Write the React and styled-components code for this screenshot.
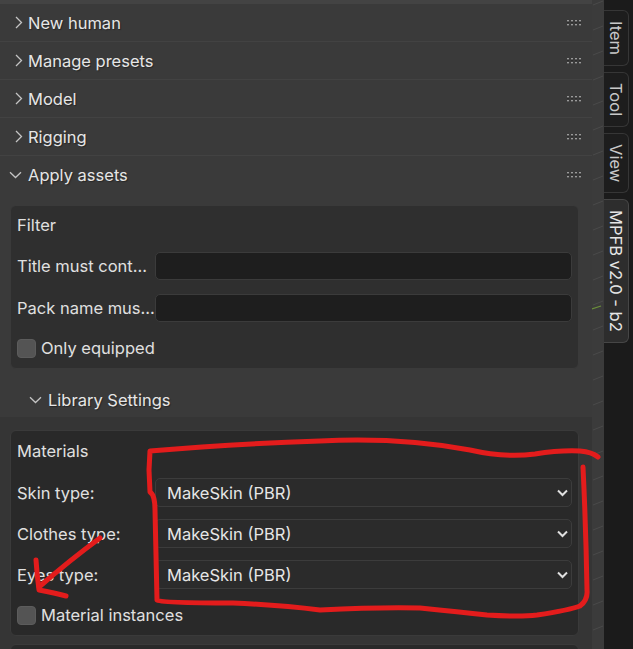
import styled, { createGlobalStyle } from "styled-components";

const GlobalStyle = createGlobalStyle`
  html, body {
    margin: 0;
    padding: 0;
    background: #1d1d1d;
  }
  body {
    font-family: Inter, "Noto Sans", "DejaVu Sans", sans-serif;
  }
`;

const Screen = styled.div`
  position: relative;
  display: flex;
  width: 633px;
  height: 649px;
  overflow: hidden;
`;

const Panel = styled.div`
  flex: none;
  width: 592px;
  display: flex;
  flex-direction: column;
  background: #3a3a3a;
  border-top: 4px solid #434343;
`;

const Header = styled.div`
  flex: none;
  display: flex;
  align-items: center;
  height: ${(p) => (p.$open ? "38px" : "37px")};
  padding-left: ${(p) => (p.$sub ? "19px" : "9px")};
  border-bottom: ${(p) => (p.$open ? "none" : "1px solid #424242")};
  color: #e6e6e6;
  font-size: 16.5px;
  text-shadow: 1px 1px 1px rgba(0, 0, 0, 0.35);
`;

const Chevron = styled.span`
  display: flex;
  align-items: center;
  justify-content: ${(p) => (p.$open ? "flex-start" : "center")};
  width: 19px;
  flex: none;
`;

const Grip = styled.span`
  margin-left: auto;
  margin-right: 11px;
  display: flex;
`;

const Body = styled.div`
  display: flex;
  flex-direction: column;
  padding: 11px 13px 0 10px;
`;

const LibraryBody = styled.div`
  display: flex;
  flex-direction: column;
  gap: 8px;
  margin: 0 -13px 0 -10px;
  padding: 13px 13px 0 10px;
  background: #353535;
`;

const Box = styled.div`
  flex: none;
  display: flex;
  flex-direction: column;
  gap: ${(p) => p.$gap}px;
  padding: ${(p) => p.$pad};
  background: ${(p) => p.$bg};
  border: 1px solid #3a3a3a;
  border-radius: 6px;
  color: #e0e0e0;
  font-size: 16.5px;
`;

const Title = styled.div`
  height: 24px;
  line-height: 24px;
  margin-bottom: ${(p) => p.$after}px;
`;

const Row = styled.div`
  display: flex;
  align-items: center;
  height: ${(p) => p.$h || 28}px;
`;

const Label = styled.span`
  width: 138px;
  flex: none;
  white-space: nowrap;
`;

const Field = styled.div`
  box-sizing: border-box;
  width: 417px;
  flex: none;
  height: 28px;
  background: #1e1e1e;
  border: 1px solid #3b3b3b;
  border-radius: 5px;
`;

const Select = styled.div`
  box-sizing: border-box;
  display: flex;
  align-items: center;
  justify-content: space-between;
  flex: none;
  width: 417px;
  height: 29px;
  padding: 0 2px 0 11px;
  background: #2b2b2b;
  border: 1px solid #3c3c3c;
  border-radius: 5px;
  color: #e6e6e6;
`;

const Check = styled.span`
  box-sizing: border-box;
  width: 19px;
  height: 19px;
  margin-right: 5px;
  background: #545454;
  border: 1px solid #5c5c5c;
  border-radius: 4px;
`;

const Strip = styled.div`
  flex: none;
  width: 12px;
  background: #3b3b3b;
`;

const TabBar = styled.div`
  flex: 1;
  display: flex;
  flex-direction: column;
  gap: 6px;
  padding-top: 10px;
  background: #1b1b1b;
`;

const Tab = styled.div`
  box-sizing: border-box;
  width: 25px;
  padding: 10px 0;
  display: flex;
  align-items: center;
  writing-mode: vertical-rl;
  background: ${(p) => (p.$active ? "#2d2d2d" : "#1d1d1d")};
  border: 1px solid ${(p) => (p.$active ? "#464646" : "#363636")};
  border-left: none;
  border-radius: 0 6px 6px 0;
  color: ${(p) => (p.$active ? "#e6e6e6" : "#c8c8c8")};
  font-size: 16.5px;
  line-height: 24px;
  white-space: nowrap;
`;

const Overlay = styled.svg`
  position: absolute;
  left: 0;
  top: 0;
  pointer-events: none;
`;

const RightIcon = () => (
  <svg width="9" height="13" viewBox="0 0 9 13">
    <path d="M2 1 L7.5 6.5 L2 12" fill="none" stroke="#c4c4c4" strokeWidth="1.3" />
  </svg>
);

const DownIcon = () => (
  <svg width="13" height="8" viewBox="0 0 13 8">
    <path d="M1 1.2 L6.5 6.5 L12 1.2" fill="none" stroke="#c4c4c4" strokeWidth="1.3" />
  </svg>
);

const SelectIcon = () => (
  <svg width="14" height="8" viewBox="0 0 14 8">
    <path d="M3 1.5 L7.5 6 L12 1.5" fill="none" stroke="#e0e0e0" strokeWidth="2" />
  </svg>
);

const GripIcon = () => (
  <svg width="14" height="6" viewBox="0 0 14 6">
    {[0, 4, 8, 12].map((x) =>
      [0, 4].map((y) => (
        <g key={`${x}-${y}`}>
          <rect x={x} y={y + 1} width="2" height="1.5" fill="#1e1e1e" />
          <rect x={x} y={y} width="2" height="1.5" fill="#9a9a9a" />
        </g>
      ))
    )}
  </svg>
);

const collapsed = ["New human", "Manage presets", "Model", "Rigging"];
const materials = ["Skin type:", "Clothes type:", "Eyes type:"];

const App = () => {
  return (
    <Screen>
      <GlobalStyle />
      <Panel>
        {collapsed.map((name) => (
          <Header key={name}>
            <Chevron>
              <RightIcon />
            </Chevron>
            {name}
            <Grip>
              <GripIcon />
            </Grip>
          </Header>
        ))}
        <Header $open>
          <Chevron $open>
            <DownIcon />
          </Chevron>
          Apply assets
          <Grip>
            <GripIcon />
          </Grip>
        </Header>
        <Body>
          <Box $bg="#2f2f2f" $gap={14} $pad="7px 6px 8px 6px">
            <Title $after={1}>Filter</Title>
            <Row>
              <Label>Title must cont...</Label>
              <Field />
            </Row>
            <Row>
              <Label>Pack name mus...</Label>
              <Field />
            </Row>
            <Row $h={24}>
              <Check />
              Only equipped
            </Row>
          </Box>
          <Header $open $sub style={{ marginTop: 13, height: 35 }}>
            <Chevron $open>
              <DownIcon />
            </Chevron>
            Library Settings
          </Header>
          <LibraryBody>
            <Box $bg="#292929" $gap={12} $pad="8px 6px 6px 6px">
              <Title $after={3}>Materials</Title>
              {materials.map((m) => (
                <Row key={m} $h={29}>
                  <Label>{m}</Label>
                  <Select>
                    MakeSkin (PBR)
                    <SelectIcon />
                  </Select>
                </Row>
              ))}
              <Row>
                <Check />
                Material instances
              </Row>
            </Box>
            <Box $bg="#292929" $gap={0} $pad="0" style={{ height: 40 }} />
          </LibraryBody>
        </Body>
      </Panel>
      <Strip>
        <svg width="12" height="649" viewBox="0 0 12 649">
          {Array.from({ length: 26 }, (_, i) => (
            <path
              key={i}
              d={`M1 ${i * 25 + 5} L11 ${i * 25 + 1}`}
              stroke="#4a4a4a"
              strokeWidth="1"
            />
          ))}
          <path d="M0 309 L9 306" stroke="#6b8f3a" strokeWidth="1.3" />
        </svg>
      </Strip>
      <TabBar>
        <Tab>Item</Tab>
        <Tab>Tool</Tab>
        <Tab>View</Tab>
        <Tab $active>MPFB v2.0 - b2</Tab>
      </TabBar>
      <Overlay width="633" height="649" viewBox="0 0 633 649">
        <g fill="none" stroke="#e31c1c" strokeWidth="5" strokeLinecap="round" strokeLinejoin="round">
          <path d="M598 457 Q592 452 580 451 Q560 450 535 454 Q505 458 470 450 Q400 437 320 441 Q230 444 150 451 L149 470 L150 492 Q155 495 155 510 L157 600 Q160 603 233 603 Q280 605 320 610 Q380 607 420 608 Q460 612 487 615 Q520 617 537 615 Q570 610 580 606 Q588 600 587 590 Q586 530 583 467" />
          <path d="M100 538 Q70 560 39 587" />
          <path d="M36 560 Q37 575 39 590 Q55 593 66 596" />
        </g>
      </Overlay>
    </Screen>
  );
};

export default App;
